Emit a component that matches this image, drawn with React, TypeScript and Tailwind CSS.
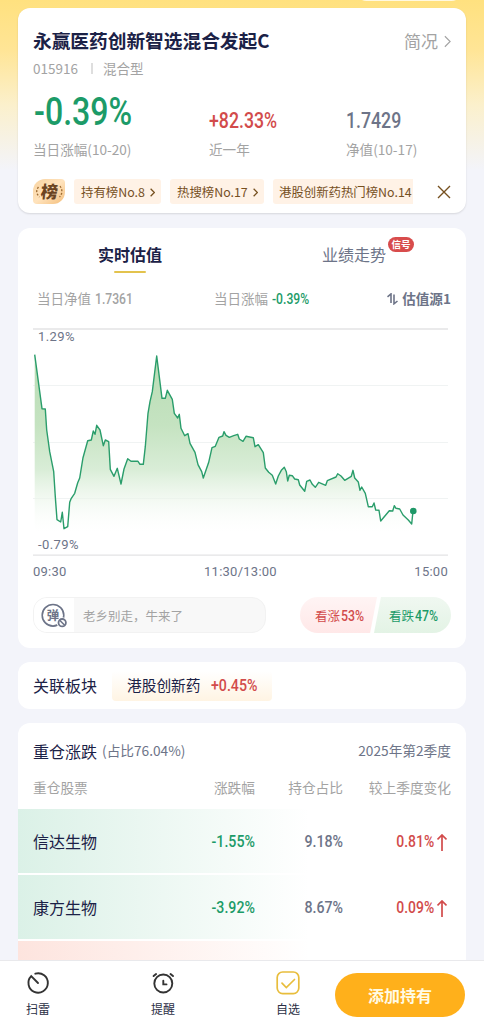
import type { ReactNode } from 'react';
import clsx from 'clsx';

const linePoints = [
  '1.7,26.7 9,80.7 12.3,81 13.7,102 16.7,123.7 20.7,143.7 22.3,168.7 24,191.7 27.7,194 29.3,184.3 31,200.7 34.7,198.7',
  '36.7,174.3 38.3,170.3 41.7,165.3 44.7,154.7 46.7,150 50,129.7 54.7,112.7 58.3,112 60.3,103 62,106.3 63.7,97.3 67,102',
  '70.3,117.7 72.3,112 75.7,113.7 77.3,141.3 81,148.3 84.3,140.3 88,156 91,141 94.7,130.7 98,133.3 105,133.3 107,136.3',
  '110.3,136.3 112.3,118.7 115,85.3 117,73.7 119.3,63.7 123.7,28 129,70.3 132.3,70.3 134.3,62.3 139.3,71.3 141.3,85.3',
  '144.7,90 146.3,86.3 148,100.3 151.7,107.7 155,105.7 157,115.3 162,124.3 165,136.7 168.7,143.7 170.3,150 175.7,134.3',
  '179,119.7 182.3,118.3 186,109.3 189.7,108 191,103.7 193,107.3 196.3,109.3 200.7,107.7 204.7,106.3 206.3,111 210,113.3',
  '213,108.3 220.3,109.7 222,118.7 225.3,116.7 230.3,124.7 232.3,140 235.7,144.3 239.3,147.3 242.7,156 245.3,148',
  '248.3,142.3 251.3,139.3 253.3,143.7 254.7,153 256.3,147.3 259.3,147.7 261.7,151 265.3,151.7 266.7,157 271.7,163.3',
  '273.7,153.3 277,152 279.3,156.3 282.3,159.3 285.7,154.3 292.7,157.3 294.3,152.7 303,149 304.7,145.7 308,148',
  '311.7,152.3 318.3,148.3 320,142.3 321.7,150 325.3,154 327,162.3 328.7,159 332.3,165.3 335.3,178.7 339.3,178.7',
  '341,175 342.7,182 346,182.3 347.7,193 356.3,182.7 359.7,183 361.3,177.7 363,180.3 366.7,181 370,187 375.3,192',
  '378.7,196 380,183',
].join(' ');

const ranks = [
  { label: '持有榜No.8', width: 'w-[87px]' },
  { label: '热搜榜No.17', width: 'w-[94px]' },
];

const holdings = [
  { name: '信达生物', change: '-1.55%', share: '9.18%', diff: '0.81%' },
  { name: '康方生物', change: '-3.92%', share: '8.67%', diff: '0.09%' },
];

// condensed figures
function Num({ children, className, right = false }: { children: ReactNode; className?: string; right?: boolean }) {
  return (
    <span className={clsx("flex whitespace-nowrap font-['Roboto'] font-medium", right && 'justify-end', className)}>
      <span className={clsx('inline-block scale-x-[0.82]', right ? 'origin-right' : 'origin-left')}>{children}</span>
    </span>
  );
}

function Chevron({ className }: { className?: string }) {
  return (
    <svg viewBox="0 0 8 14" fill="none" stroke="currentColor" className={className}>
      <path d="M1 1l6 6-6 6" />
    </svg>
  );
}

function FundCard() {
  return (
    <section className="h-[205px] shrink-0 rounded-xl bg-white px-[15px] pt-[18px] shadow-[0_1px_2px_rgba(0,0,0,0.12)]">
      <div className="flex h-[30px] items-center justify-between pb-0.5">
        <h1 className="text-[18.7px] font-bold text-[#1b2146]">永赢医药创新智选混合发起C</h1>
        <div className="flex items-center gap-1.5 pt-0.5 text-[17px] text-[#a3a3a3]">
          简况
          <Chevron className="h-[13px] w-[7px] stroke-[1.3]" />
        </div>
      </div>
      <div className="mt-0.5 flex h-[22px] items-center pb-0.5 text-[13.5px] text-[#a3a3a3]">
        015916
        <span className="mr-[10px] ml-[13px] h-[11px] w-0.5 bg-[#dedede]" />
        混合型
      </div>
      <div className="mt-3 grid grid-cols-[176px_137px_1fr]">
        <div>
          <Num className="h-10 pl-px text-[38px] leading-10 text-[#1c9b68]">
            <span className="inline-block origin-left scale-x-[1.03]">-0.39%</span>
          </Num>
          <p className="mt-[7px] text-[13.6px] leading-5 text-[#a3a3a3]">当日涨幅(10-20)</p>
        </div>
        <div>
          <Num className="h-10 pt-[9px] text-[21.6px] leading-10 text-[#d24b4b]">+82.33%</Num>
          <p className="mt-[7px] text-[13.6px] leading-5 text-[#a3a3a3]">近一年</p>
        </div>
        <div>
          <Num className="h-10 pt-[9px] text-[21.6px] leading-10 text-[#6d7488]">1.7429</Num>
          <p className="mt-[7px] text-[13.6px] leading-5 text-[#a3a3a3]">净值(10-17)</p>
        </div>
      </div>
      <div className="mt-5 flex h-[25px] items-center text-[12.4px] text-[#76501f]">
        <div className="mr-[9px] flex h-[25px] w-8 items-center justify-center rounded-tl-xl rounded-tr-sm rounded-br-xl rounded-bl-sm bg-linear-to-br from-[#f8d3a0] via-[#ffe3bd] to-[#f3bd78] text-[#6b4522]">
          <svg viewBox="0 0 32 25" className="h-[25px] w-8">
            <g fill="none" stroke="#9c6a31" strokeWidth="1.3" strokeDasharray="2 1.6">
              <path d="M5.5 8q-4 5 1 10" />
              <path d="M27 7q4 6-.5 11" />
            </g>
            <text x="16" y="18.5" textAnchor="middle" fontSize="17" fontWeight="900" fill="currentColor" transform="skewX(-6) translate(1.6 0)">
              榜
            </text>
          </svg>
        </div>
        {ranks.map((rank) => (
          <div key={rank.label} className={clsx('mr-[9px] flex h-[25px] items-center justify-between rounded-[3px] bg-[#fff2e6] pt-px pr-1.5 pl-[7px]', rank.width)}>
            {rank.label}
            <Chevron className="h-[9px] w-[5px] stroke-2" />
          </div>
        ))}
        <div className="flex h-[25px] w-[140px] items-center overflow-hidden rounded-l-[3px] bg-[#fff2e6] pt-px pl-1.5 whitespace-nowrap">
          港股创新药热门榜No.14
        </div>
        <svg viewBox="0 0 14 14" stroke="currentColor" strokeWidth="1.4" className="ml-auto size-3.5">
          <path d="M1 1l12 12M13 1L1 13" />
        </svg>
      </div>
    </section>
  );
}

function Chart() {
  return (
    <div className="relative mt-[17px] h-[228px] w-[415px] font-['Roboto'] text-[13px] tracking-[0.4px] text-[#6d7488]">
      <svg viewBox="0 0 415 228" className="h-[228px] w-[415px]">
        <defs>
          <linearGradient id="area" x1="0" y1="26" x2="0" y2="204" gradientUnits="userSpaceOnUse">
            <stop offset="0" stopColor="#b8dcb4" />
            <stop offset="0.4" stopColor="#c5e3c1" />
            <stop offset="0.65" stopColor="#d9edd7" />
            <stop offset="1" stopColor="#fff" stopOpacity="0.2" />
          </linearGradient>
        </defs>
        <path d="M0 57.5h415M0 114.5h415M0 170.5h415" stroke="#f0f3f3" />
        <path d="M0 1h415M0 227.2h415" stroke="#e3e4e5" strokeWidth="1.3" />
        <polygon points={`1.7,204 ${linePoints} 380,204`} fill="url(#area)" />
        <polyline points={linePoints} fill="none" stroke="#2a9d6b" strokeWidth="1.4" strokeLinejoin="round" />
        <circle cx="380.3" cy="183" r="3.3" fill="#1f9868" />
      </svg>
      <span className="absolute top-0 left-[5px] leading-[18px]">1.29%</span>
      <span className="absolute bottom-0.5 left-[5px] leading-[18px]">-0.79%</span>
    </div>
  );
}

function ValuationCard() {
  return (
    <section className="h-[420px] shrink-0 rounded-xl bg-white px-[15px] pt-[11px]">
      <div className="-mx-[15px] grid grid-cols-2 text-center text-base">
        <div className="flex flex-col items-center font-bold text-[#1b2146]">
          <span className="h-8 leading-[30px]">实时估值</span>
          <span className="h-0.5 w-8 rounded-full bg-[#e3c34e]" />
        </div>
        <div className="text-[#6d7488]">
          <span className="relative inline-block leading-[30px]">
            业绩走势
            <span className="absolute -top-[2px] left-[66px] h-[15px] w-[26px] rounded-full bg-[#d84c4c] text-[9.5px] leading-[15px] font-bold whitespace-nowrap text-white">
              信号
            </span>
          </span>
        </div>
      </div>
      <div className="mt-4 flex h-[22px] items-center pb-[3px] pl-1 text-[13.5px] text-[#a3a3a3]">
        当日净值
        <Num className="ml-1 w-[119px] pt-0.5 text-[14.8px]">1.7361</Num>
        当日涨幅
        <Num className="ml-1 w-12 pt-0.5 text-[14.8px] text-[#1c9b68]">-0.39%</Num>
        <div className="ml-auto flex items-center gap-1 font-bold text-[#6d7488]">
          <svg viewBox="0 0 11 12" fill="none" stroke="currentColor" strokeWidth="1.6" className="h-3 w-[11px]">
            <path d="M.5 3.8L4 .9V10M7 1.5v9.3L10.5 8" />
          </svg>
          <span className="text-[13.6px]">估值源1</span>
        </div>
      </div>
      <Chart />
      <div className="mt-1.5 grid w-[415px] grid-cols-3 font-['Roboto'] text-[13px] leading-5 tracking-[0.25px] text-[#6d7488]">
        <span>09:30</span>
        <span className="text-center whitespace-nowrap">11:30/13:00</span>
        <span className="text-right">15:00</span>
      </div>
      <div className="mt-[15px] flex h-9 justify-between text-[12.5px]">
        <div className="flex w-[233px] items-center overflow-hidden rounded-[14px] border border-[#f2f2f2] bg-[#f8f8f8] text-[#a3a3a3]">
          <div className="flex h-full w-10 items-center bg-white pl-[7px]">
            <svg viewBox="0 0 27 25" fill="none" stroke="#6d7488" className="h-[25px] w-[27px]">
              <circle cx="12" cy="12.3" r="10.8" strokeWidth="1.6" />
              <text x="12" y="16.5" textAnchor="middle" fontSize="12.5" fontWeight="700" fill="#6d7488" stroke="none">
                弹
              </text>
              <circle cx="21.2" cy="19.7" r="5.5" fill="#fff" stroke="none" />
              <circle cx="21.2" cy="19.7" r="3.7" strokeWidth="1.8" />
              <path d="M18.7 17.2l5 5" strokeWidth="1.6" />
            </svg>
          </div>
          <span className="ml-[9px] pt-0.5">老乡别走，牛来了</span>
        </div>
        <div className="flex">
          <div className="flex w-[77px] items-center rounded-l-full bg-linear-to-b from-[#fff4f4] to-[#ffe8e8] pt-0.5 pl-[15px] text-[#d24b4b] [clip-path:polygon(0_0,100%_0,91%_100%,0_100%)]">
            看涨<Num className="pl-px text-[15px]">53%</Num>
          </div>
          <div className="-ml-[3px] flex w-[77px] items-center rounded-r-full bg-linear-to-b from-[#f0f8f1] to-[#e3f3e5] pt-0.5 pl-[15px] text-[#1c9b68] [clip-path:polygon(9%_0,100%_0,100%_100%,0_100%)]">
            看跌<Num className="pl-px text-[15px]">47%</Num>
          </div>
        </div>
      </div>
    </section>
  );
}

function SectorCard() {
  return (
    <section className="-mt-px flex h-[47px] shrink-0 items-center rounded-xl bg-white px-[15px] text-[#1b2146]">
      <h2 className="pb-0.5 text-base">关联板块</h2>
      <div className="ml-[15px] flex h-[30px] w-40 items-center rounded bg-linear-to-b from-white to-[#fff4e3] pl-[15px] text-[14.7px]">
        港股创新药
        <Num className="ml-[11px] text-[17.3px] text-[#d24b4b]">+0.45%</Num>
      </div>
    </section>
  );
}

function HoldingsCard() {
  return (
    <section className="-mt-px h-[400px] shrink-0 overflow-hidden rounded-xl bg-white pt-[11px]">
      <div className="flex h-8 items-center px-[15px] text-[13.7px] text-[#6d7488]">
        <h2 className="mr-[5px] pt-px text-base text-[#1b2146]">重仓涨跌</h2>
        (占比76.04%)
        <span className="ml-auto">2025年第2季度</span>
      </div>
      <div className="mt-2.5 grid h-[22px] grid-cols-[1fr_88px_108px] items-center px-[15px] text-right text-[13.7px] text-[#a3a3a3]">
        <div className="flex justify-between">
          <span>重仓股票</span>
          <span>涨跌幅</span>
        </div>
        <span>持仓占比</span>
        <span>较上季度变化</span>
      </div>
      <div className="mt-[11px] flex flex-col gap-0.5">
        {holdings.map((item) => (
          <div
            key={item.name}
            className="grid h-16 grid-cols-[1fr_88px_108px] items-center bg-linear-to-r from-[#dbf1e7] to-white to-[65%] px-[15px] pt-0.5 text-[17.3px]"
          >
            <div className="flex items-center justify-between">
              <span className="pb-0.5 text-base text-[#1b2146]">{item.name}</span>
              <Num right className="text-[#1c9b68]">{item.change}</Num>
            </div>
            <Num right className="text-[#6d7488]">{item.share}</Num>
            <div className="flex items-center justify-end gap-[3px] pr-1 text-[#d24b4b]">
              <Num right className="text-[17px]">{item.diff}</Num>
              <svg viewBox="0 0 10 17" fill="none" stroke="currentColor" strokeWidth="1.7" className="h-[17px] w-2.5">
                <path d="M5 17V1M.5 5.5L5 1l4.5 4.5" />
              </svg>
            </div>
          </div>
        ))}
        <div className="h-16 bg-linear-to-r from-[#fde4de] to-white to-[65%]" />
      </div>
    </section>
  );
}

function BottomBar() {
  return (
    <nav className="flex h-[70px] shrink-0 border-t border-[#e9e9ec] bg-white pt-2.5 text-xs text-[#2b2f45]">
      <div className="ml-[13px] flex w-[50px] flex-col items-center">
        <svg viewBox="0 0 24 24" fill="none" stroke="#333" strokeWidth="1.9" strokeLinecap="round" className="size-6">
          <path d="M9.3 2.7A9.7 9.7 0 1 1 5.2 5.2L12 12" />
        </svg>
        <span className="mt-[5px] leading-[18px]">扫雷</span>
      </div>
      <div className="ml-[75px] flex w-[50px] flex-col items-center">
        <svg viewBox="0 0 24 24" fill="none" stroke="#333" strokeWidth="1.9" strokeLinecap="round" className="size-6">
          <circle cx="12.3" cy="12.5" r="9" />
          <path d="M2.6 5.1L5.1 3M22 5.1L19.5 3M12.3 9.8v3.6h3.2" />
        </svg>
        <span className="mt-[5px] leading-[18px]">提醒</span>
      </div>
      <div className="ml-[75px] flex w-[50px] flex-col items-center">
        <svg viewBox="0 0 24 24" fill="none" stroke="#e8bd3c" strokeWidth="1.7" strokeLinecap="round" className="size-6">
          <rect x="1.2" y="1" width="21.6" height="21.6" rx="5.5" />
          <path d="M6 12.2l4.3 4.3L18.5 8.5" />
        </svg>
        <span className="mt-[5px] leading-[18px]">自选</span>
      </div>
      <button className="mt-0.5 ml-[22px] h-11 w-[130px] rounded-full bg-[#ffb01b] text-base font-bold text-[#fffbe6]">添加持有</button>
    </nav>
  );
}

export default function App() {
  return (
    <div className="flex h-[1030px] w-[484px] flex-col overflow-hidden bg-[#f3f4fa] font-['Noto_Sans_CJK_SC',sans-serif]">
      <main className="relative flex h-[960px] flex-col gap-[15px] overflow-hidden bg-[linear-gradient(to_bottom,#ffe17f_0px,#ffe596_50px,#fbf0cc_105px,#f3f4fa_170px)] px-[18px] pt-2">
        <div className="absolute -top-5 left-[356px] h-[21px] w-[106px] rounded-full bg-[#fff8df]" />
        <FundCard />
        <ValuationCard />
        <SectorCard />
        <HoldingsCard />
      </main>
      <BottomBar />
    </div>
  );
}
